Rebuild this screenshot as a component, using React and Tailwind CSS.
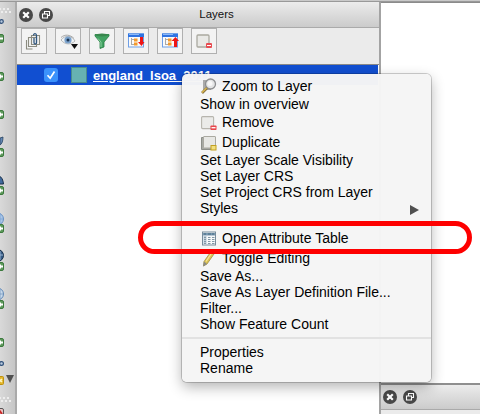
import React from "react";

function PlusTool({ children }) {
  return (
    <svg className="block h-[38px] w-[15px] shrink-0" viewBox="0 0 15 38">
      {children}
      <rect x="-4.5" y="23.5" width="8" height="8" rx="1.5" fill="#5e9a5c" stroke="#3c7a3e" />
      <path d="M-1 27.5h4M0 25.5v4" stroke="#fff" strokeWidth="2" />
    </svg>
  );
}

function Grip() {
  return (
    <svg className="block h-[6px] w-[15px] shrink-0" viewBox="0 0 15 6">
      <path d="M0 0h1v2H0zM3 0h2v2H3zM7 0h2v2H7zM1 3h2v2H1zM5 3h2v2H5zM9 3h2v2H9z" fill="#ededed" />
    </svg>
  );
}

function SideBar() {
  return (
    <div className="flex w-[17px] shrink-0 flex-col overflow-hidden border-r-2 border-[#aaa] bg-linear-to-r from-[#d9d9d9] to-[#c6c6c6] pt-[6px]">
      <Grip />
      <svg className="block h-[35px] w-[15px] shrink-0" viewBox="0 0 15 35">
        <circle cx="1.5" cy="7.500" r="1.8" fill="#b9cbe0" stroke="#2f4f78" strokeWidth="1.2" />
        <rect x="-4.5" y="20.5" width="8" height="8" rx="1.5" fill="#5e9a5c" stroke="#3c7a3e" />
        <path d="M-1 24.5h4" stroke="#fff" strokeWidth="2" />
      </svg>
      <PlusTool />
      <PlusTool />
      <PlusTool>
        <path d="M0 13l3-1c0 4-1 7-3 8z" fill="#6388b5" stroke="#28425f" strokeWidth=".8" />
      </PlusTool>
      <PlusTool>
        <path d="M-1 13c3 1 4 4 4.500 8H-1z" fill="#426c9e" stroke="#182f49" />
      </PlusTool>
      <PlusTool>
        <circle cx="-2.500" cy="18" r="6" fill="#a9c6e8" stroke="#6690c4" />
        <path d="M-3 18h6M0 12v11" stroke="#7da3d2" strokeWidth=".8" />
      </PlusTool>
      <PlusTool>
        <circle cx="-2.500" cy="16.500" r="6" fill="#375d89" stroke="#182f49" />
        <path d="M-3 16h6M0 12v9" stroke="#a5bdd8" strokeWidth=".9" />
      </PlusTool>
      <PlusTool>
        <circle cx="-2.500" cy="17" r="6" fill="#c7d9eb" stroke="#6088b6" />
        <path d="M-3 17h6M0 12v11" stroke="#7798bd" strokeWidth=".8" />
      </PlusTool>
      <PlusTool />
      <svg className="block h-[44px] w-[15px] shrink-0" viewBox="0 0 15 44">
        <circle cx="1.500" cy="10.500" r="1.900" fill="#b9cbe0" stroke="#2f4f78" strokeWidth="1.200" />
        <rect x="-3.500" y="23.500" width="7" height="8" rx="1" fill="#e3b62c" stroke="#bd910e" />
        <path d="M-1 26l3 3M2 26l-3 3" stroke="#fff6c2" strokeWidth="1.500" />
        <path d="M6 22h8l-4 8z" fill="#505050" />
      </svg>
      <Grip />
      <svg className="block h-[11px] w-[15px] shrink-0" viewBox="0 0 15 11">
        <rect x="-3.500" y="5.500" width="7" height="8" rx="1.500" fill="#e9c4c4" stroke="#555" />
        <path d="M-1 7l3 4" stroke="#c92727" strokeWidth="2" />
      </svg>
    </div>
  );
}

function WindowButtons() {
  return (
    <>
      <svg className="block size-[14px] shrink-0" viewBox="0 0 14 14">
        <circle cx="7" cy="7" r="7" fill="#484848" />
        <path d="M4.200 4.200l5.600 5.600M9.800 4.200L4.200 9.800" stroke="#fff" strokeWidth="2.200" />
      </svg>
      <svg className="ml-[6px] block size-[14px] shrink-0" viewBox="0 0 14 14">
        <circle cx="7" cy="7" r="7" fill="#484848" />
        <path d="M5.500 5.500v-2h5v4h-2M3.500 6h5v4h-5z" fill="none" stroke="#fff" strokeWidth="1.100" />
      </svg>
    </>
  );
}

function ToolButton({ children }) {
  return (
    <div className="size-[26px] border border-[#b0b0b0] bg-[#f3f3f3]">
      <svg className="block size-6" viewBox="0 0 24 24">{children}</svg>
    </div>
  );
}

function TreeWindow() {
  return (
    <>
      <rect x="4.500" y="5" width="15" height="13" fill="#fafafa" stroke="#6f9fe6" />
      <path d="M4 4.500h16v3.500H4z" fill="#2f74e2" />
      <path d="M5 5.500h10" stroke="#8db9f7" />
      <path d="M7.500 9v7M7.500 10.500h3M7.500 15.500h3" stroke="#aaa" fill="none" />
      <path d="M10 9.500h3.500v3H10zM10 13.500h3.500v3H10z" fill="#f39a2c" />
    </>
  );
}

function LayersPanel() {
  return (
    <div className="flex w-[362px] shrink-0 flex-col">
      <div className="flex h-[26px] shrink-0 items-center border-b border-[#aaa] bg-linear-to-b from-[#ececec] to-[#cbcbcb] pl-[2px]">
        <WindowButtons />
        <div className="flex-1 pl-[1px] text-center text-[11.500px] leading-none">Layers</div>
      </div>
      <div className="flex h-[37px] shrink-0 gap-2 border-b border-[#888] bg-[#ebebeb] pl-[4px]">
        <ToolButton>
          <path d="M4.500 11v9h6" fill="none" stroke="#8c8c80" strokeWidth="1.100" />
          <path d="M6.500 8.500h8v9h-8zM9.500 6.500h8v9h-8z" fill="none" stroke="#8c8c80" strokeWidth="1.100" />
          <path d="M11.500 6.500c0-2.500 3-2.500 3 0v7c0 2-2.500 2-2.500 0V9" fill="none" stroke="#31577f" strokeWidth="1.300" />
        </ToolButton>
        <ToolButton>
          <path d="M5 11c3.500-5 11-5 14 1-4 4-10 4-14-1z" fill="#f0f3f5" stroke="#a4a8ab" strokeWidth=".8" />
          <path d="M5 8.500c4-3.500 9-3 13 1" fill="none" stroke="#a6a6a6" />
          <circle cx="12" cy="11" r="3.600" fill="#7ba2cc" />
          <circle cx="12" cy="11" r="1.500" fill="#1d3652" />
          <path d="M15 15h7l-3.500 5z" fill="#111" />
        </ToolButton>
        <ToolButton>
          <path d="M5 5.500h14v1.500l-5 6v5l-4 1.500V13L5 7z" fill="#43a363" stroke="#257e42" strokeWidth=".8" />
          <ellipse cx="12" cy="6" rx="6.500" ry="1.500" fill="#39884e" />
          <path d="M8 9.500l3 3.500v5" stroke="#8cd3a1" fill="none" />
        </ToolButton>
        <ToolButton>
          <TreeWindow />
          <path d="M16 8h3v5h1.500L17.500 17 14 13h2z" fill="#ef1515" />
        </ToolButton>
        <ToolButton>
          <TreeWindow />
          <path d="M16 18v-6h-2.500L17.500 8l3.500 4h-2v6z" fill="#ef1515" />
        </ToolButton>
        <ToolButton>
          <rect x="5" y="6" width="12" height="12" rx="1" fill="#e9e9e6" stroke="#aaa9a0" strokeWidth="1.300" />
          <rect x="14" y="14" width="6" height="5" rx="1" fill="#e74d52" />
          <path d="M15 16.500h4" stroke="#fff" />
        </ToolButton>
      </div>
      <div className="mr-[1px] flex h-5 shrink-0 items-center bg-[#114fd1] pl-[27px]">
        <svg className="block size-[14px]" viewBox="0 0 14 14">
          <rect width="14" height="14" rx="3" fill="#3b92fb" />
          <path d="M3.500 7.200l2.700 3L10.500 3.500" fill="none" stroke="#fff" strokeWidth="1.700" />
        </svg>
        <div className="ml-[13px] size-4 border border-[#4b8c8c] bg-[#66b2b2]" />
        <div className="ml-[6px] text-[13px] font-bold leading-none text-white underline">england_lsoa_2011</div>
      </div>
      <div className="flex-1 bg-white" />
    </div>
  );
}

function MenuIcon({ name }) {
  return (
    <svg className="mr-[5px] ml-[1px] block size-4 shrink-0 overflow-visible" viewBox="0 0 16 16">
      {name === "zoom" && (
        <>
          <path d="M2 2h8v10H2z" fill="#aaa" />
          <circle cx="9.500" cy="6" r="5" fill="#e4e5e6" stroke="#8d8f91" strokeWidth="1.300" />
          <circle cx="9" cy="5.500" r="2.500" fill="#f8f8f8" />
          <path d="M6 10l-5 5" stroke="#8c7440" strokeWidth="2.600" />
          <path d="M5.500 10L1 14.500" stroke="#e0bd4e" strokeWidth="1.100" />
        </>
      )}
      {name === "remove" && (
        <>
          <rect x=".6" y="2.600" width="12" height="12" rx="1" fill="#ebebe9" stroke="#b7b5ae" strokeWidth="1.100" />
          <rect x="9.500" y="11.500" width="6" height="4.500" rx=".7" fill="#e8474c" />
          <path d="M10.500 13.700h4" stroke="#fff" strokeWidth="1.300" />
        </>
      )}
      {name === "duplicate" && (
        <>
          <path d="M.5 3.500h10v12H.5z" fill="#a7a9a4" stroke="#8c8e88" />
          <rect x="2.500" y="2.500" width="12" height="11.500" rx=".5" fill="#e7e7e4" stroke="#aaa9a1" />
          <rect x="10" y="11.500" width="5" height="4.500" fill="#f2df7e" stroke="#c2a021" />
        </>
      )}
      {name === "table" && (
        <>
          <rect x="1.500" y="2" width="13" height="13" fill="#f6f8f9" stroke="#768b9b" />
          <path d="M2 3h12v2.500H2z" fill="#7897af" />
          <path d="M2.500 6h3v8.500h-3z" fill="#b9cad7" />
          <path d="M3 7.500h2M3 9.500h2M3 11.500h2M3 13.500h2M7 7.500h2.500M11 7.500h2.500M7 9.500h2.500M11 9.500h2.500M7 11.500h2.500M11 11.500h2.500M7 13.500h2.500M11 13.500h2.500" stroke="#8297a6" />
          <path d="M3 4h2M7 4h3M11 4h2" stroke="#456a83" />
        </>
      )}
      {name === "pencil" && (
        <>
          <path d="M3 11.500L10 1.500l3 2.500-7 10-3.500 2z" fill="#dcc354" stroke="#988438" strokeWidth=".7" />
          <path d="M5 11.500l6-9" stroke="#f7e89b" strokeWidth="1.200" />
          <path d="M3 11.500l3 2.500-4 2.500z" fill="#8a8a86" />
        </>
      )}
    </svg>
  );
}

const ITEMS = [
  { label: "Zoom to Layer", icon: "zoom" },
  { label: "Show in overview" },
  { label: "Remove", icon: "remove" },
  { label: "Duplicate", icon: "duplicate" },
  { label: "Set Layer Scale Visibility" },
  { label: "Set Layer CRS" },
  { label: "Set Project CRS from Layer" },
  { label: "Styles", submenu: true },
  null,
  { label: "Open Attribute Table", icon: "table" },
  { label: "Toggle Editing", icon: "pencil" },
  { label: "Save As..." },
  { label: "Save As Layer Definition File..." },
  { label: "Filter..." },
  { label: "Show Feature Count" },
  null,
  { label: "Properties" },
  { label: "Rename" },
];

function ContextMenu() {
  return (
    <div className="absolute top-[74px] left-[182px] h-[308px] w-[249px] rounded-[5px] bg-[#f5f5f5]/98 pt-[2px] text-[14px] text-black shadow-[0_0_0_1px_rgba(0,0,0,0.180),0_5px_14px_rgba(0,0,0,0.300)]">
      {ITEMS.map((item, i) =>
        item ? (
          <div key={i} className={`flex items-center whitespace-nowrap pr-3 pl-[18px] ${item.icon ? "h-5" : "h-4"}`}>
            {item.icon && <MenuIcon name={item.icon} />}
            <span className="leading-4">{item.label}</span>
            {item.submenu && (
              <svg className="mt-[3px] ml-auto block h-[10px] w-[9px]" viewBox="0 0 9 10">
                <path d="M0 0l9 5-9 5z" fill="#505050" />
              </svg>
            )}
          </div>
        ) : (
          <div key={i} className="flex h-3 items-center">
            <div className="h-[2px] w-full bg-[#e2e2e2]" />
          </div>
        )
      )}
    </div>
  );
}

export default function App() {
  return (
    <div className="relative flex h-[414px] w-[480px] flex-col overflow-hidden bg-white font-['Liberation_Sans',Arial,sans-serif] text-[#111]">
      <div className="h-[2px] shrink-0 border-b border-[#999] bg-[#c9c9c9]" />
      <div className="flex min-h-0 flex-1">
        <SideBar />
        <LayersPanel />
        <div className="flex flex-1 flex-col border-l-2 border-[#a3a3a3]">
          <div className="flex-1 border-t border-[#8b8b8b] bg-white" />
          <div className="flex h-[27px] shrink-0 items-center border-t-2 border-b border-t-[#8f8f8f] border-b-[#aaa] bg-linear-to-b from-[#ececec] to-[#cbcbcb] pl-[2px]">
            <div className="-mt-[1px] flex">
              <WindowButtons />
            </div>
          </div>
          <div className="h-[4px] shrink-0 bg-[#ebebeb]" />
        </div>
      </div>
      <ContextMenu />
      <div className="absolute top-[221px] left-[138px] h-[33px] w-[334px] rounded-full border-[5px] border-[#fe0000]" />
    </div>
  );
}
